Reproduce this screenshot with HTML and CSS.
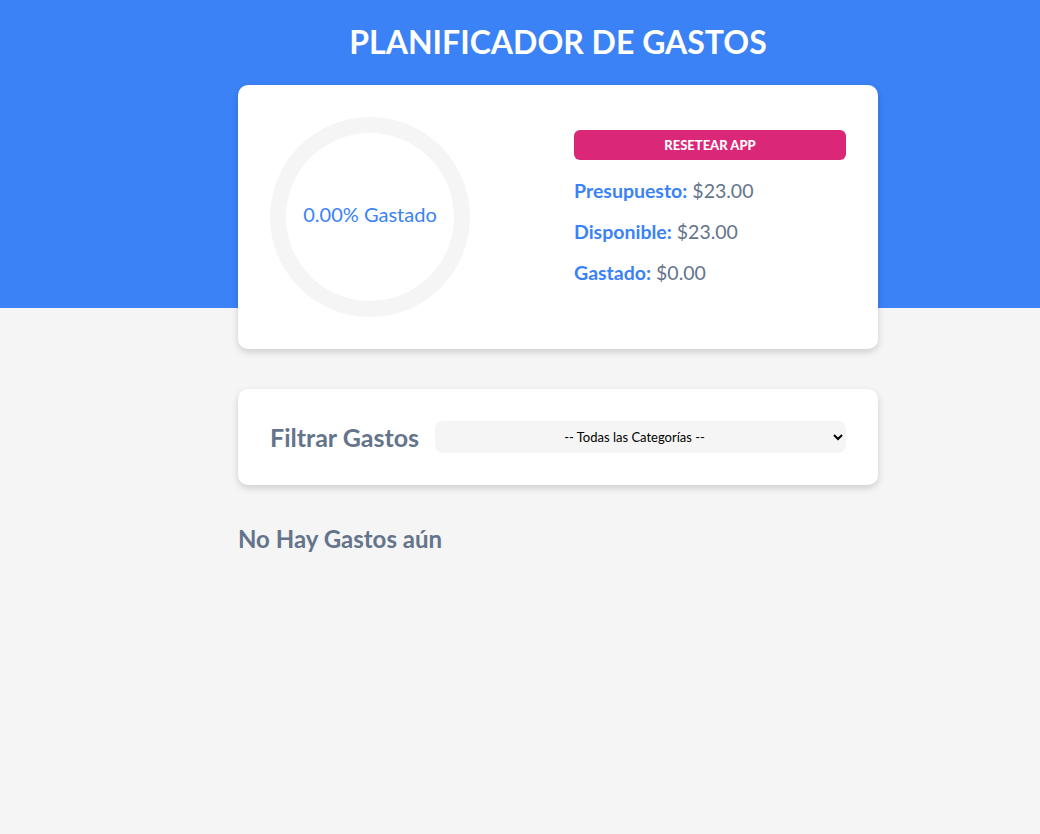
FILE: index.html
```html
<!DOCTYPE html>
<html lang="es">
<head>
<meta charset="UTF-8">
<title>Planificador de Gastos</title>
<link rel="stylesheet" href="styles.css">
</head>
<body>
<header class="header">
  <div class="container">
    <h1 class="title">Planificador de Gastos</h1>
    <div class="card budget">
      <div class="budget-chart">
        <svg class="ring" viewBox="0 0 200 200" width="200" height="200">
          <circle cx="100" cy="100" r="92" fill="none" stroke="#f5f5f5" stroke-width="16"/>
          <text x="100" y="97" class="ring-text" text-anchor="middle" dominant-baseline="central">0.00% Gastado</text>
        </svg>
      </div>
      <div class="budget-info">
        <button class="reset-btn" type="button">Resetear App</button>
        <p class="amount"><span class="amount-label">Presupuesto:</span> $23.00</p>
        <p class="amount"><span class="amount-label">Disponible:</span> $23.00</p>
        <p class="amount"><span class="amount-label">Gastado:</span> $0.00</p>
      </div>
    </div>
  </div>
</header>
<main class="container">
  <div class="card filters">
    <label class="filter-label" for="filtro">Filtrar Gastos</label>
    <select id="filtro" class="filter-select">
      <option>-- Todas las Categorías --</option>
    </select>
  </div>
  <h2 class="empty-title">No Hay Gastos aún</h2>
</main>
</body>
</html>
```

FILE: styles.css
```css
* {
  box-sizing: border-box;
}

html, body {
  margin: 0;
  padding: 0;
}

body {
  font-family: Lato, "Open Sans", sans-serif;
  background-color: #f5f5f5;
  min-height: 834px;
}

.container {
  width: 640px;
  margin-left: 238px;
}

.header {
  background-color: #3b82f6;
}

.header .container {
  display: flow-root;
}

.title {
  margin: 0 0 22px;
  padding-top: 21px;
  font-size: 32px;
  line-height: 42px;
  font-weight: 700;
  color: #ffffff;
  text-align: center;
  text-transform: uppercase;
}

.card {
  background-color: #ffffff;
  border-radius: 10px;
  box-shadow: 0 3px 7px rgba(0, 0, 0, 0.16);
  padding: 32px;
}

.budget {
  display: grid;
  grid-template-columns: 1fr 1fr;
  gap: 32px;
  margin-bottom: -41px;
}

.budget-chart {
  height: 200px;
}

.ring {
  display: block;
}

.ring-text {
  fill: #3b82f6;
  font-family: Lato, sans-serif;
  font-size: 20px;
}

.budget-info {
  padding-top: 13px;
}

.reset-btn {
  display: block;
  width: 100%;
  height: 30px;
  border: none;
  border-radius: 6px;
  background-color: #db2777;
  color: #ffffff;
  font-family: Lato, sans-serif;
  font-weight: 900;
  font-size: 13px;
  text-transform: uppercase;
  margin: 0 0 19px;
  cursor: pointer;
}

.amount {
  margin: 0 0 17px;
  font-size: 19.5px;
  line-height: 24px;
  color: #64748b;
}

.amount-label {
  color: #3b82f6;
  font-weight: 700;
}

.filters {
  margin-top: 81px;
  display: flex;
  align-items: center;
  gap: 16px;
}

.filter-label {
  font-size: 25px;
  line-height: 32px;
  font-weight: 700;
  color: #64748b;
  white-space: nowrap;
}

.filter-select {
  flex: 1;
  height: 32px;
  border: none;
  border-radius: 8px;
  background-color: #f5f5f5;
  font-family: Lato, sans-serif;
  font-size: 13px;
  color: #000000;
  text-align: center;
  padding: 0 6px;
}

.empty-title {
  margin: 39px 0 0;
  font-size: 24px;
  line-height: 29px;
  font-weight: 700;
  color: #64748b;
}
```
